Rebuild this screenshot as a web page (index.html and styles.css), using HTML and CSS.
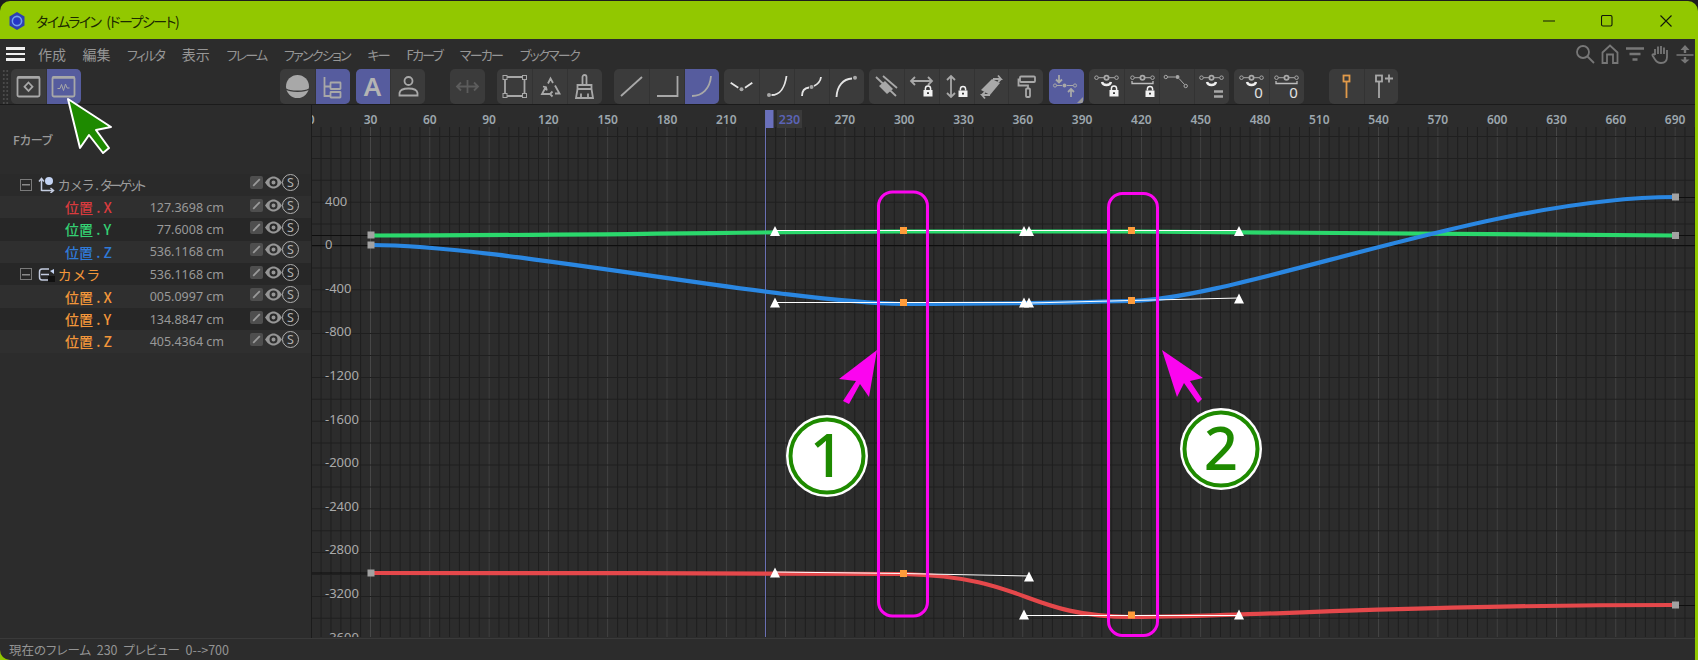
FILE: index.html
```html
<!DOCTYPE html>
<html lang="ja">
<head>
<meta charset="utf-8">
<title>タイムライン (ドープシート)</title>
<link rel="stylesheet" href="styles.css">
</head>
<body>
<svg class="defs" width="0" height="0" aria-hidden="true">
  <defs>
    <g id="lock"><path class="lock-arc" d="M-2.6 -2V-3.4A2.6 2.6 0 0 1 2.6 -3.4V-2"/><path class="lock-body" fill-rule="evenodd" d="M-4.5 -2H4.5V4.5H-4.5ZM-1 0.2V2H1V0.2Z"/></g>
    <g id="nl"><path class="thin" d="M9.5 8.7H15.5M19.5 8.7H25.5"/><circle class="thin" cx="7.5" cy="8.7" r="1.8"/><circle class="thin" cx="27.5" cy="8.7" r="1.8"/><circle class="fg" cx="17.5" cy="8.7" r="2.1"/></g>
    <path id="tri" d="M0 -5.5L5 4.5H-5Z"/>
    <rect id="ok" x="-3.5" y="-3.5" width="7" height="7"/>
    <rect id="gk" x="-3.5" y="-3.5" width="7" height="7"/>
    <g id="pencil"><rect class="pen-box" width="13" height="13" rx="2"/><path class="pen-line" d="M3.2 9.8L9.8 3.2"/></g>
    <g id="eye"><path class="eye-shape" fill-rule="evenodd" d="M0 6.5C3 1.8 6 0.5 8.5 0.5S14 1.8 17 6.5C14 11.2 11 12.5 8.5 12.5S3 11.2 0 6.5ZM8.5 2.5A4 4 0 1 0 8.5 10.500A4 4 0 1 0 8.5 2.500ZM8.500 4.500A2 2 0 1 1 8.500 8.500A2 2 0 1 1 8.500 4.500Z"/></g>
  </defs>
</svg>

<div class="window">
  <header class="titlebar">
    <svg class="app-logo" viewBox="0 0 16 18"><path class="logo-hex" d="M8 0L15.5 4.5V13.5L8 18L0.5 13.5V4.5Z"/><circle class="logo-ring" cx="8" cy="9" r="4.6"/><circle class="logo-core" cx="7.4" cy="9.4" r="2.8"/></svg>
    <span class="title-text">タイムライン (ドープシート)</span>
    <div class="win-controls">
      <span class="win-btn"><svg viewBox="0 0 12 12" width="12" height="12"><path d="M0 6H12"/></svg></span>
      <span class="win-btn"><svg viewBox="0 0 12 12" width="12" height="12"><rect x="0.5" y="0.5" width="10.5" height="10.5" rx="1.5"/></svg></span>
      <span class="win-btn"><svg viewBox="0 0 12 12" width="12" height="12"><path d="M0.5 0.5L11.5 11.5M11.5 0.5L0.5 11.5"/></svg></span>
    </div>
  </header>

  <div class="content">
    <nav class="menubar">
      <span class="burger"><i></i><i></i><i></i></span>
      <span class="kj">作成</span><span class="kj">編集</span><span>フィルタ</span><span class="kj">表示</span><span>フレーム</span><span>ファンクション</span><span>キー</span><span>Fカーブ</span><span>マーカー</span><span>ブックマーク</span>
      <div class="nav-icons">
        <svg viewBox="0 0 20 20"><circle cx="8" cy="8" r="6"/><path d="M12.5 12.5L19 19"/></svg>
        <svg viewBox="0 0 20 20"><path d="M2.5 19V8.5L10 1.5L17.5 8.5V19H13V10.5H7V19Z"/></svg>
        <svg viewBox="0 0 20 20"><path class="wide" d="M1 4.5H19M4.5 10H15.5M7.5 15.5H12.5"/></svg>
        <svg viewBox="0 0 20 20"><path d="M5 11V5M8 10V2.5M11 10V2M14 10V3.5M17 11V6V13C17 17 14.5 19 11 19C8 19 6.5 18 5 15.5L2.5 11.5C2 10.5 3.5 9.5 4.5 10.5L5 11"/></svg>
        <svg viewBox="0 0 20 20"><path class="solid" d="M10 1L14.5 6H11.2V9H8.8V6H5.5ZM1.5 10.2H18.5V11.8H1.5ZM8.8 13H11.2V15.5H14.5L10 19.5L5.5 15.5H8.8Z"/></svg>
      </div>
    </nav>

    <div class="toolbar">
      <span class="grip"></span>
      <div class="group">
        <span class="btn"><svg class="ic" viewBox="0 0 35 35"><rect x="6.5" y="8" width="22" height="19.5" rx="1.5"/><path class="wide" d="M6.5 8.5H28.5"/><path d="M17.5 13.5L21.5 17.7L17.5 22L13.5 17.7Z"/></svg></span>
        <span class="btn on"><svg class="ic" viewBox="0 0 35 35"><rect x="6.5" y="8" width="22" height="19.5" rx="1.5"/><path class="wide" d="M6.5 8.5H28.5"/><path class="thin" d="M11.5 19.5H14L15.5 15.5L17.5 21.5L19.5 15L21 19H23.5"/></svg></span>
      </div>
      <div class="group g-far">
        <span class="btn"><svg class="ic" viewBox="0 0 35 35"><circle class="fg" cx="17.5" cy="17.5" r="11.5"/><path class="cut" d="M6 20C10 23 25 23 29 20"/></svg></span>
        <span class="btn on"><svg class="ic" viewBox="0 0 35 35"><path d="M9.5 8V27H16M9.5 17.5H16"/><rect x="15.5" y="13.5" width="10" height="6.5" rx="0.5"/><rect x="15.5" y="23" width="10" height="5.5" rx="0.5"/></svg></span>
      </div>
      <div class="group">
        <span class="btn on"><svg class="ic" viewBox="0 0 35 35"><text class="big-a" x="17.5" y="26.5">A</text></svg></span>
        <span class="btn"><svg class="ic" viewBox="0 0 35 35"><circle cx="17.5" cy="12" r="4"/><path d="M8.5 26.5V24C9 21 12.5 19.5 17.5 19.5S26 21 26.500 24V26.500Z"/></svg></span>
      </div>
      <div class="group g-lg">
        <span class="btn"><svg class="ic dim" viewBox="0 0 35 35"><path d="M7 17.500H28M11 13.500L7 17.500L11 21.500M24 13.500L28 17.500L24 21.500M17.500 11V24"/></svg></span>
      </div>
      <div class="group g-md">
        <span class="btn"><svg class="ic" viewBox="0 0 35 35"><path d="M10 8H25.500M10 27H25.500M8 10V25M27.500 10V25"/><rect class="thin" x="6" y="6.500" width="4" height="4"/><rect class="thin" x="25.500" y="6.500" width="4" height="4"/><rect class="thin" x="6" y="24.500" width="4" height="4"/><rect class="thin" x="25.500" y="24.500" width="4" height="4"/></svg></span>
        <span class="btn"><svg class="ic" viewBox="0 0 35 35"><path d="M15 14.500L17.500 9.500L20 14M22 16.500L26.500 24.500H22M17 25H9L12.500 18.500M10 17.500L13 18.300L13.800 21.500M19.500 22.500L17 25L19.500 27.500"/></svg></span>
        <span class="btn"><svg class="ic" viewBox="0 0 35 35"><path d="M15.500 16V8A2 2 0 0 1 19.500 8V16M10.500 16H24.500V20H10.500ZM10.500 20L9 29H26L24.500 20M14 24.500V29M21 24.500V29"/></svg></span>
      </div>
      <div class="group g-md">
        <span class="btn"><svg class="ic" viewBox="0 0 35 35"><path d="M7 27L28 8"/></svg></span>
        <span class="btn"><svg class="ic" viewBox="0 0 35 35"><path d="M7 27H27.500V7"/></svg></span>
        <span class="btn on"><svg class="ic" viewBox="0 0 35 35"><path d="M8 27C18 27 26 20 27 7"/></svg></span>
      </div>
      <div class="group">
        <span class="btn"><svg class="ic w" viewBox="0 0 35 35"><path d="M6.700 13.700L14.300 18.700M21 18.700L28.300 13.700"/><circle class="fg" cx="17.500" cy="20.300" r="2"/></svg></span>
        <span class="btn"><svg class="ic w" viewBox="0 0 35 35"><path d="M11.500 26C20 26 25 18 26.500 7"/><circle class="fg" cx="9" cy="26" r="2"/></svg></span>
        <span class="btn"><svg class="ic w" viewBox="0 0 35 35"><path d="M8 27C8 21 11 19 15 18.500M20 17C24 15 26.500 12 27 8"/><circle class="fg" cx="17.500" cy="18" r="2"/></svg></span>
        <span class="btn"><svg class="ic w" viewBox="0 0 35 35"><path d="M7.500 28C8 17 14 10 23 9.500"/><circle class="fg" cx="26" cy="8.700" r="2"/></svg></span>
      </div>
      <div class="group">
        <span class="btn"><svg class="ic" viewBox="0 0 35 35"><path d="M7 8L27 27M14 7L28 19"/><path class="fg" d="M10 17L16 12L24 20L18 25Z"/></svg></span>
        <span class="btn"><svg class="ic" viewBox="0 0 35 35"><path d="M7 12H28M11 8L7 12L11 16M24 8L28 12L24 16"/><use href="#lock" x="24" y="23"/></svg></span>
        <span class="btn"><svg class="ic" viewBox="0 0 35 35"><path d="M12 7V28M8 11L12 7L16 11M8 24L12 28L16 24"/><use href="#lock" x="24" y="23.500"/></svg></span>
        <span class="btn"><svg class="ic" viewBox="0 0 35 35"><path class="fg" d="M7 21L18 10L26 14L16 26Z"/><path d="M19 10H27L24 6.500M27 10L24 13M16 26H8L11 29.500M8 26L11 23"/></svg></span>
        <span class="btn"><svg class="ic" viewBox="0 0 35 35"><rect x="11" y="7.500" width="15" height="5.500" rx="1"/><path d="M11 10.500H9.500V16.500H19V19.500"/><rect x="17" y="19.500" width="4" height="8.500" rx="1"/></svg></span>
      </div>
      <div class="group">
        <span class="btn on"><svg class="ic" viewBox="0 0 35 35"><path d="M10 6V13M7 10.500L10 13.500L13 10.500M22 28V20M19 23L22 20L25 23"/><path class="thin" d="M7.500 16.500H13M18 16.500H24"/><circle class="thin" cx="6" cy="16.500" r="1.600"/><circle class="thin" cx="26" cy="16.500" r="1.600"/><circle class="fg" cx="15.500" cy="16.500" r="2"/><path class="corner" d="M34 28V34H28Z"/></svg></span>
      </div>
      <div class="group">
        <span class="btn"><svg class="ic" viewBox="0 0 35 35"><use href="#nl"/><path class="w-stroke" d="M13 13C14 17 21 17 22 13"/><use href="#lock" x="25" y="23"/></svg></span>
        <span class="btn"><svg class="ic" viewBox="0 0 35 35"><use href="#nl"/><path class="w-stroke slim" d="M7 12V14.500H28V12"/><use href="#lock" x="25" y="23.500"/></svg></span>
        <span class="btn"><svg class="ic" viewBox="0 0 35 35"><path class="thin" d="M8.500 8H16.500M20 9.500L25.500 15.500"/><circle class="thin" cx="6.800" cy="8" r="1.700"/><circle class="thin" cx="26.700" cy="17" r="1.700"/><circle class="fg" cx="18.500" cy="8" r="2"/></svg></span>
        <span class="btn"><svg class="ic" viewBox="0 0 35 35"><use href="#nl"/><path class="w-stroke" d="M13 13C14 17 21 17 22 13"/><path class="wide" d="M20 22.500H29M20 27.500H29"/></svg></span>
      </div>
      <div class="group">
        <span class="btn"><svg class="ic" viewBox="0 0 35 35"><use href="#nl"/><path class="w-stroke" d="M13 13C14 17 21 17 22 13"/><text class="zero" x="24.500" y="29">0</text></svg></span>
        <span class="btn"><svg class="ic" viewBox="0 0 35 35"><use href="#nl"/><path class="w-stroke slim" d="M7 12V14.500H28V12"/><text class="zero" x="24.500" y="29">0</text></svg></span>
      </div>
      <div class="group g-lg">
        <span class="btn"><svg class="ic orange" viewBox="0 0 35 35"><rect x="14.500" y="6.500" width="6" height="6"/><path d="M17.500 12.500V29"/></svg></span>
        <span class="btn"><svg class="ic" viewBox="0 0 35 35"><rect x="12" y="6.500" width="6" height="6"/><path d="M15 12.500V29M21 9.500H29M25 5.500V13.500"/></svg></span>
      </div>
    </div>

    <div class="main">
      <aside class="panel">
        <div class="panel-head">Fカーブ</div>
        <div class="tree">
          <div class="row">
            <span class="label top"><i class="twist"></i>
              <svg class="obj" viewBox="0 0 17 17"><path d="M3.500 15V3M1 5.500L3.500 2.500L6 5.500M3.500 14.500H15M12.500 12L15.500 14.500L12.500 17"/><circle class="obj-dot" cx="11" cy="5" r="4"/></svg>
              <span class="t-grey">カメラ<span class="dot">.</span><span class="squeeze">ターゲット</span></span></span>
            <span class="value"></span>
            <span class="tools"><svg class="s-pen" viewBox="0 0 13 13"><use href="#pencil"/></svg><svg class="s-eye" viewBox="0 0 17 13"><use href="#eye"/></svg><b class="solo">S</b></span>
          </div>
          <div class="row"><span class="label c-red">位置 . X</span><span class="value">127.3698 cm</span><span class="tools"><svg class="s-pen" viewBox="0 0 13 13"><use href="#pencil"/></svg><svg class="s-eye" viewBox="0 0 17 13"><use href="#eye"/></svg><b class="solo">S</b></span></div>
          <div class="row"><span class="label c-green">位置 . Y</span><span class="value">77.6008 cm</span><span class="tools"><svg class="s-pen" viewBox="0 0 13 13"><use href="#pencil"/></svg><svg class="s-eye" viewBox="0 0 17 13"><use href="#eye"/></svg><b class="solo">S</b></span></div>
          <div class="row"><span class="label c-blue">位置 . Z</span><span class="value">536.1168 cm</span><span class="tools"><svg class="s-pen" viewBox="0 0 13 13"><use href="#pencil"/></svg><svg class="s-eye" viewBox="0 0 17 13"><use href="#eye"/></svg><b class="solo">S</b></span></div>
          <div class="row">
            <span class="label top"><i class="twist"></i>
              <svg class="obj" viewBox="0 0 17 17"><path d="M11 3H4C2 3 1.500 4 1.500 6V11C1.500 13 2 14 4 14H11M3 8.500H11"/><rect class="obj-tag" x="10" y="10" width="7" height="6"/><path class="obj-dot" d="M12 5L16 3V8Z"/></svg>
              <span class="c-orange cam">カメラ</span></span>
            <span class="value">536.1168 cm</span>
            <span class="tools"><svg class="s-pen" viewBox="0 0 13 13"><use href="#pencil"/></svg><svg class="s-eye" viewBox="0 0 17 13"><use href="#eye"/></svg><b class="solo">S</b></span>
          </div>
          <div class="row"><span class="label c-orange">位置 . X</span><span class="value">005.0997 cm</span><span class="tools"><svg class="s-pen" viewBox="0 0 13 13"><use href="#pencil"/></svg><svg class="s-eye" viewBox="0 0 17 13"><use href="#eye"/></svg><b class="solo">S</b></span></div>
          <div class="row"><span class="label c-orange">位置 . Y</span><span class="value">134.8847 cm</span><span class="tools"><svg class="s-pen" viewBox="0 0 13 13"><use href="#pencil"/></svg><svg class="s-eye" viewBox="0 0 17 13"><use href="#eye"/></svg><b class="solo">S</b></span></div>
          <div class="row"><span class="label c-orange">位置 . Z</span><span class="value">405.4364 cm</span><span class="tools"><svg class="s-pen" viewBox="0 0 13 13"><use href="#pencil"/></svg><svg class="s-eye" viewBox="0 0 17 13"><use href="#eye"/></svg><b class="solo">S</b></span></div>
        </div>
      </aside>

      <svg class="graph" viewBox="312 105 1383 532" width="1383" height="532">
        <line class="grid-minor" x1="312" y1="382" x2="1695" y2="382"/>
        <line class="grid-major" x1="312" y1="382" x2="1695" y2="382"/>
        <line class="grid-hor" x1="1003" y1="127" x2="1003" y2="637"/>

        <path class="ext" d="M312 235.500H371M312 245.500H1695M312 573H371M1675 197.500H1695M1675 235.500H1695M1675 605.500H1695"/>

        <g class="ruler">
          <text x="311.200" y="124">0</text><text x="370.500" y="124">30</text><text x="429.800" y="124">60</text><text x="489.100" y="124">90</text><text x="548.400" y="124">120</text><text x="607.700" y="124">150</text><text x="667" y="124">180</text><text x="726.300" y="124">210</text><text x="844.900" y="124">270</text><text x="904.200" y="124">300</text><text x="963.500" y="124">330</text><text x="1022.800" y="124">360</text><text x="1082.100" y="124">390</text><text x="1141.400" y="124">420</text><text x="1200.700" y="124">450</text><text x="1260" y="124">480</text><text x="1319.300" y="124">510</text><text x="1378.600" y="124">540</text><text x="1437.900" y="124">570</text><text x="1497.200" y="124">600</text><text x="1556.500" y="124">630</text><text x="1615.800" y="124">660</text><text x="1675.100" y="124">690</text>
        </g>
        <rect class="cur-box" x="777" y="110" width="25" height="18"/>
        <text class="cur-num" x="789.500" y="124">230</text>
        <rect class="cur-head" x="766" y="110" width="7.500" height="18"/>
        <line class="cur-line" x1="765.500" y1="110" x2="765.500" y2="637"/>

        <g class="yaxis">
          <text x="325" y="206">400</text><text x="325" y="249">0</text><text x="325" y="293">-400</text><text x="325" y="336">-800</text><text x="325" y="380">-1200</text><text x="325" y="424">-1600</text><text x="325" y="467">-2000</text><text x="325" y="511">-2400</text><text x="325" y="554">-2800</text><text x="325" y="598">-3200</text><text x="325" y="642">-3600</text>
        </g>

        <path class="curve green" d="M371 235.500C600 235.500 775 231.500 903 231.500C1024 231.500 1029 231.500 1131 231.500C1239 231.500 1450 235.500 1675 235.500"/>
        <path class="curve blue" d="M371 245C500 245 775 302 903 304C1024 304 1029 303 1131 301C1239 299 1490 197 1675 197"/>
        <path class="curve red" d="M371 573C500 573 775 573 903 574C1029 577 1024 616 1131 617C1239 617 1400 605 1675 605"/>

        <path class="handle" d="M775 230.500H1024M1029 230.500H1239M775 302.500H903H1024M1029 303L1131 300.500L1239 298M775 572L903 573.500L1029 576M1024 615.500H1239"/>

        <g class="tri">
          <use href="#tri" x="775" y="231.500"/><use href="#tri" x="1024" y="231.500"/><use href="#tri" x="1029" y="231.500"/><use href="#tri" x="1239" y="231.500"/>
          <use href="#tri" x="775" y="303"/><use href="#tri" x="1024" y="303"/><use href="#tri" x="1029" y="303"/><use href="#tri" x="1239" y="299"/>
          <use href="#tri" x="775" y="573"/><use href="#tri" x="1029" y="577"/><use href="#tri" x="1024" y="615"/><use href="#tri" x="1239" y="615"/>
        </g>
        <g class="okey">
          <use href="#ok" x="903.500" y="230.500"/><use href="#ok" x="1131.500" y="230.500"/><use href="#ok" x="903.500" y="302.500"/><use href="#ok" x="1131.500" y="300.500"/><use href="#ok" x="903.500" y="573.500"/><use href="#ok" x="1131.500" y="615"/>
        </g>
        <g class="gkey">
          <use href="#gk" x="371" y="235"/><use href="#gk" x="371" y="245"/><use href="#gk" x="371" y="573"/><use href="#gk" x="1675.500" y="197"/><use href="#gk" x="1675.500" y="235.500"/><use href="#gk" x="1675.500" y="605"/>
        </g>
      </svg>
    </div>

    <footer class="status">現在のフレーム&nbsp; 230&nbsp; プレビュー&nbsp; 0--&gt;700</footer>
  </div>

  <svg class="overlay" viewBox="0 0 1698 660" width="1698" height="660">
    <rect class="mbox" x="878.500" y="192" width="49" height="424" rx="14"/>
    <rect class="mbox" x="1108.500" y="193.500" width="49" height="442" rx="14"/>
    <polygon class="marrow" points="877,350 839,379 856,381 843,401 849,404 860,384 869,397"/>
    <polygon class="marrow" points="1162,350 1203,378 1190,381 1202,399 1198,403 1184,383 1177,397"/>
    <circle class="disc" cx="827" cy="456" r="41"/>
    <circle class="ring" cx="827" cy="456" r="36.500"/>
    <text class="digit" x="827" y="477">1</text>
    <circle class="disc" cx="1221" cy="449" r="41"/>
    <circle class="ring" cx="1221" cy="449" r="36.500"/>
    <text class="digit" x="1221" y="469.500">2</text>
    <polygon class="pointer" points="68,99 111,127 96,130 109,148 103,153 89,135 80,148"/>
  </svg>
</div>
</body>
</html>
```

FILE: styles.css
```css
* { box-sizing: border-box; }
html, body { margin: 0; padding: 0; }
body {
  width: 1698px;
  height: 660px;
  overflow: hidden;
  background: #1e1e1e;
  font-family: "Noto Sans CJK JP", "Noto Sans", sans-serif;
  font-feature-settings: "palt";
}
.defs { position: absolute; }

.window {
  position: relative;
  margin-top: 1px;
  height: 659px;
  background: #92c800;
  border-radius: 10px 10px 0 0;
  display: flex;
  flex-direction: column;
  overflow: hidden;
}
.titlebar {
  height: 38px;
  flex: none;
  display: flex;
  align-items: center;
  padding: 2px 3px 0 9px;
}
.app-logo { width: 16px; height: 18px; flex: none; }
.logo-hex { fill: #2c3fb4; }
.logo-ring { fill: none; stroke: #6f9cf0; stroke-width: 1.6; }
.logo-core { fill: #2436c8; }
.title-text {
  margin-left: 11px;
  font-size: 14px;
  letter-spacing: -1.500px;
  word-spacing: 4px;
  color: #1c2a00;
}
.win-controls { margin-left: auto; display: flex; }
.win-btn { width: 58.5px; display: flex; justify-content: center; }
.win-btn svg { fill: none; stroke: #10180a; stroke-width: 1.1; }

.content {
  flex: 1;
  min-height: 0;
  margin-right: 3px;
  background: #2c2c2c;
  border-bottom-left-radius: 10px;
  display: flex;
  flex-direction: column;
  overflow: hidden;
}

.menubar {
  height: 30px;
  flex: none;
  display: flex;
  align-items: center;
  gap: 17.500px;
  padding: 0 0 0 6px;
  font-size: 13px;
  letter-spacing: -1.700px;
  color: #969696;
}
.menubar .kj { font-size: 14px; letter-spacing: 0; margin-right: -1px; }
.burger {
  width: 19px;
  margin-right: -4.500px;
  display: flex;
  flex-direction: column;
  gap: 3px;
}
.burger i { display: block; height: 2.500px; background: #f0f0f0; }
.nav-icons { margin-left: auto; display: flex; gap: 5px; }
.nav-icons svg {
  width: 20px;
  height: 20px;
  fill: none;
  stroke: #777;
  stroke-width: 1.800;
}
.nav-icons .wide { stroke-width: 2.600; }
.nav-icons .solid { fill: #777; stroke: none; }

.toolbar {
  height: 36px;
  flex: none;
  display: flex;
  align-items: flex-start;
  border-bottom: 1px solid #1b1b1b;
}
.grip {
  width: 7px;
  height: 35px;
  margin: 0 2px 0 2px;
  background-image: radial-gradient(#4a4a4a 0.700px, transparent 1px);
  background-size: 3.500px 4px;
}
.group {
  display: flex;
  height: 35px;
  margin-right: 5.700px;
  background: #3b3b3b;
  border-radius: 5px;
  overflow: hidden;
}
.g-far { margin-left: 194px; }
.g-lg { margin-left: 19.300px; }
.g-md { margin-left: 6.800px; }
.btn {
  width: 34.800px;
  height: 35px;
  display: flex;
  align-items: center;
  justify-content: center;
  flex: none;
}
.btn + .btn { border-left: 1px solid #333; }
.btn.on { background: #565c9e; }
.ic {
  width: 35px;
  height: 35px;
  flex: none;
  fill: none;
  stroke: #a8a8a8;
  stroke-width: 1.800;
}
.ic.w { stroke: #e4e4e4; }
.ic.dim { stroke: #5c5c5c; }
.ic.orange { stroke: #e09a4a; }
.ic .thin, #nl .thin { stroke-width: 1; fill: none; stroke: #a8a8a8; }
.ic .wide { stroke-width: 2.400; stroke: #a8a8a8; }
.ic .fg { fill: #a8a8a8; stroke: none; }
.ic .cut { stroke: #3b3b3b; stroke-width: 1.400; }
.ic .corner { fill: #9a9a9a; stroke: none; }
.w-stroke { stroke: #eeeeee; stroke-width: 2.400; }
.w-stroke.slim { stroke: #bdbdbd; stroke-width: 1.300; }
.lock-arc { fill: none; stroke: #f2f2f2; stroke-width: 1.500; }
.lock-body { fill: #f2f2f2; stroke: none; }
.big-a {
  font-family: "Noto Sans", sans-serif;
  font-weight: 600;
  font-size: 26px;
  fill: #b4b4b4;
  stroke: none;
  text-anchor: middle;
}
.zero {
  font-family: "Noto Sans", sans-serif;
  font-size: 15px;
  fill: #e2e2e2;
  stroke: none;
  text-anchor: middle;
}

.main { flex: 1; min-height: 0; display: flex; }
.panel {
  width: 312px;
  flex: none;
  border-right: 1px solid #1b1b1b;
  display: flex;
  flex-direction: column;
}
.panel-head {
  height: 68.500px;
  flex: none;
  padding: 26px 0 0 13px;
  font-size: 12px;
  font-weight: 500;
  color: #9a9a9a;
}
.row {
  height: 22.400px;
  display: flex;
  align-items: center;
  font-size: 14px;
}
.row:nth-child(odd) { background: #2a2a2a; }
.row:nth-child(even) { background: #2f2f2f; }
.row:nth-child(3), .row:nth-child(5), .row:nth-child(7) { background: #272727; }
.label {
  width: 150px;
  flex: none;
  padding-left: 65px;
  font-weight: 500;
  white-space: nowrap;
  display: flex;
  align-items: center;
}
.label.top { padding-left: 20px; font-weight: 400; font-size: 13px; }
.twist {
  width: 12px;
  height: 12px;
  flex: none;
  border: 1px solid #7a7a7a;
  background: linear-gradient(#8a8a8a, #8a8a8a) center / 8px 1.500px no-repeat;
}
.obj {
  width: 17px;
  height: 17px;
  flex: none;
  margin: 0 3px 0 6px;
  fill: none;
  stroke: #c4cce0;
  stroke-width: 1.500;
}
.obj .obj-dot { fill: #c4d4f4; stroke: none; }
.obj .obj-tag { fill: #111; stroke: none; }
.t-grey { color: #9c9c9c; letter-spacing: 0.500px; }
.t-grey .dot { margin: 0 1px; }
.t-grey .squeeze { letter-spacing: -2.800px; }
.c-red { color: #d83b3e; }
.c-green { color: #34d073; }
.c-blue { color: #2f7ad8; }
.c-orange { color: #f2963a; }
.cam { font-size: 14px; letter-spacing: 2px; }
.value {
  width: 74px;
  flex: none;
  display: flex;
  justify-content: flex-end;
  white-space: nowrap;
  font-family: "Noto Sans", sans-serif;
  font-size: 12.500px;
  color: #999;
}
.tools {
  margin: 0 0 4px 26px;
  display: flex;
  align-items: center;
  gap: 2px;
}
.s-pen { width: 13px; height: 13px; }
.s-eye { width: 17px; height: 13px; }
.pen-box { fill: #4e4e4e; }
.pen-line { stroke: #9a9a9a; stroke-width: 1.800; fill: none; }
.eye-shape { fill: #969696; }
.solo {
  width: 17px;
  height: 17px;
  margin-left: -2px;
  border: 1.300px solid #b0b0b0;
  border-radius: 50%;
  display: flex;
  align-items: center;
  justify-content: center;
  font-family: "Noto Sans", sans-serif;
  font-size: 12.500px;
  font-weight: 400;
  color: #b0b0b0;
}

.graph { flex: none; display: block; }
.grid-minor { stroke: #1f1f1f; stroke-width: 510; stroke-dasharray: 1 8.883; stroke-dashoffset: 1.298; }
.grid-major { stroke: #474747; stroke-width: 510; stroke-dasharray: 1 58.300; stroke-dashoffset: 1.300; }
.grid-hor { stroke: #1f1f1f; stroke-width: 1383; stroke-dasharray: 1 20.900; stroke-dashoffset: 12.900; }
.ext { fill: none; stroke: #0e0e0e; stroke-width: 1; }
.ruler text {
  font-family: "Noto Sans", sans-serif;
  font-size: 12px;
  font-weight: 600;
  fill: #9ca6ad;
  text-anchor: middle;
}
.cur-box { fill: #3a3a3a; }
.cur-num {
  font-family: "Noto Sans", sans-serif;
  font-size: 12.500px;
  font-weight: 600;
  fill: #5a63b5;
  text-anchor: middle;
}
.cur-head { fill: #6a70bc; }
.cur-line { stroke: #6a70b4; stroke-width: 1; }
.yaxis text {
  font-family: "Noto Sans", sans-serif;
  font-size: 13px;
  fill: #aaa;
}
.curve { fill: none; stroke-width: 4.200; }
.green { stroke: #2bd86c; }
.blue { stroke: #2a87e2; }
.red { stroke: #e5484b; }
.handle { fill: none; stroke: #fff; stroke-width: 1; }
.tri { fill: #fff; }
.okey { fill: #ff9c3a; }
.gkey { fill: #a2a2a2; }

.status {
  height: 22px;
  flex: none;
  border-top: 1px solid #3a3a3a;
  padding: 1px 0 0 9px;
  font-size: 12.500px;
  color: #949494;
  white-space: pre;
}

.overlay { position: absolute; top: -1px; left: 0; pointer-events: none; }
.mbox { fill: none; stroke: #fb05ef; stroke-width: 3; }
.marrow { fill: #fb05ef; }
.disc { fill: #fff; }
.ring { fill: none; stroke: #1e8a00; stroke-width: 4; }
.digit {
  font-family: "Noto Sans", sans-serif;
  font-size: 60px;
  font-weight: 500;
  fill: #1e8a00;
  text-anchor: middle;
}
.pointer { fill: #1e8a00; stroke: #fff; stroke-width: 2; stroke-linejoin: round; }
```
